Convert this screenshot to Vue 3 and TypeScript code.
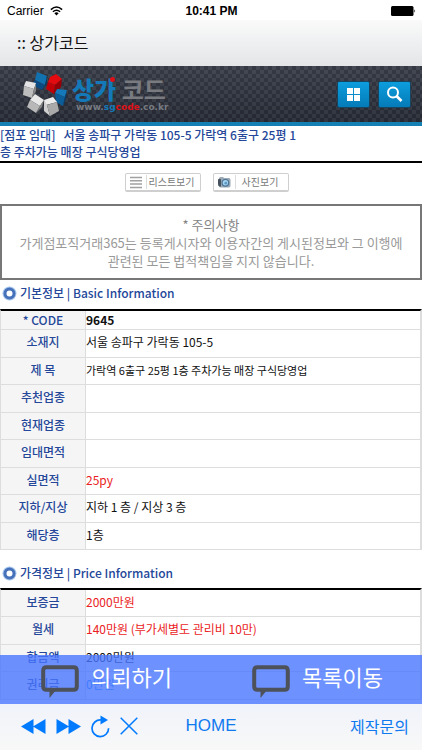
<script setup lang="ts">
interface Row {
  label: string
  value: string
  tone?: 'strong' | 'small' | 'red' | 'link'
}

const basicRows: Row[] = [
  { label: '* CODE', value: '9645', tone: 'strong' },
  { label: '소재지', value: '서울 송파구 가락동 105-5' },
  { label: '제 목', value: '가락역 6출구 25평 1층 주차가능 매장 구식당영업', tone: 'small' },
  { label: '추천업종', value: '' },
  { label: '현재업종', value: '' },
  { label: '임대면적', value: '' },
  { label: '실면적', value: '25py', tone: 'red' },
  { label: '지하/지상', value: '지하 1 층 / 지상 3 층' },
  { label: '해당층', value: '1층' },
]

const priceRows: Row[] = [
  { label: '보증금', value: '2000만원', tone: 'red' },
  { label: '월세', value: '140만원 (부가세별도 관리비 10만)', tone: 'red' },
  { label: '합금액', value: '2000만원' },
  { label: '권리금', value: '0만원', tone: 'link' },
]

const sections = [
  { title: '기본정보 | Basic Information', rows: basicRows, kind: 'basic' },
  { title: '가격정보 | Price Information', rows: priceRows, kind: 'price' },
]

const actions = ['의뢰하기', '목록이동']
</script>

<template>
  <div class="app">
    <div class="status">
      <div class="carrier">
        <span>Carrier</span>
        <svg width="13" height="10" viewBox="0 0 13 10" aria-hidden="true">
          <path d="M0.9 3.6 Q6.5 -1.6 12.1 3.6" fill="none" stroke="#000" stroke-width="1.6" />
          <path d="M2.9 5.8 Q6.5 2.6 10.1 5.8" fill="none" stroke="#000" stroke-width="1.5" />
          <path d="M4.4 7.3 Q6.5 5.4 8.6 7.3 L6.5 9.5 Z" fill="#000" />
        </svg>
      </div>
      <span class="clock">10:41 PM</span>
      <svg class="battery" width="25" height="10" viewBox="0 0 25 10" aria-hidden="true">
        <rect x="0" y="0" width="22.5" height="10" rx="1.5" />
        <path d="M23.4 3.2 Q25 5 23.4 6.8 Z" />
      </svg>
    </div>

    <div class="titlebar">:: 상가코드</div>

    <div class="web">
      <div class="page">
        <header class="banner">
          <a class="logo" href="#">
            <svg width="46" height="46" viewBox="0 0 46 46" aria-hidden="true">
              <g>
                <path d="M15 1 L25 5 L23 14 L13 9 Z" fill="#1272b0" />
                <path d="M13 9 L23 14 L20 19 L10 14 Z" fill="#0b4b84" />
                <path d="M23 14 L25 5 L25 12 L21 19 Z" fill="#083a68" />
              </g>
              <g>
                <path d="M28 6 L34 3 L40 8 L33 14 L26 11 Z" fill="#e30a10" />
                <path d="M26 11 L33 14 L32 23 L24 18 Z" fill="#c20008" />
                <path d="M33 14 L40 8 L39 16 L32 23 Z" fill="#960006" />
              </g>
              <g>
                <path d="M35 18 L45 19 L43 26 L33 22 Z" fill="#1578b8" />
                <path d="M33 22 L43 26 L41 35 L34 31 Z" fill="#0c5c98" />
                <path d="M43 26 L45 19 L44 28 L41 35 Z" fill="#083a68" />
              </g>
              <g>
                <path d="M4 10 L14 12 L12 18 L2 15 Z" fill="#e5e5e5" />
                <path d="M2 15 L12 18 L10 27 L1 24 Z" fill="#bdbdbd" />
                <path d="M12 18 L14 12 L14 20 L10 27 Z" fill="#858585" />
              </g>
              <g>
                <path d="M13 23 L22 29 L18 35 L8 29 Z" fill="#e8e8e8" />
                <path d="M8 29 L18 35 L14 42 L5 36 Z" fill="#b8b8b8" />
                <path d="M18 35 L22 29 L20 36 L14 42 Z" fill="#858585" />
              </g>
              <g>
                <path d="M22 29 L31 26 L35 31 L24 34 Z" fill="#ececec" />
                <path d="M22 29 L25 34 L28 45 L22 40 Z" fill="#d0d0d0" />
                <path d="M25 34 L35 31 L37 40 L28 45 Z" fill="#aaa" />
              </g>
            </svg>
            <span class="brand">
              <span class="name"><b>상가</b> <i>코드</i></span>
              <span class="domain">www.<b>sg</b><em>code</em>.co.kr</span>
            </span>
          </a>
          <div class="tools">
            <button type="button" aria-label="메뉴">
              <svg width="13" height="13" viewBox="0 0 13 13">
                <path d="M0 0h6v6H0z M7 0h6v6H7z M0 7h6v6H0z M7 7h6v6H7z" fill="#fff" />
              </svg>
            </button>
            <button type="button" aria-label="검색">
              <svg width="17" height="17" viewBox="0 0 17 17" fill="none" stroke="#fff">
                <circle cx="7" cy="6.5" r="5" stroke-width="2" />
                <path d="M10.5 10 L15.5 15" stroke-width="2.6" />
              </svg>
            </button>
          </div>
        </header>

        <h1>[점포 임대] &nbsp; 서울 송파구 가락동 105-5 가락역 6출구 25평 1<br />층 주차가능 매장 구식당영업</h1>

        <div class="views">
          <button type="button">
            <svg width="12" height="13" viewBox="0 0 12 13" aria-hidden="true">
              <path d="M0 1.5h12M0 4.8h12M0 8.1h12M0 11.4h12" stroke="#a0a0a0" stroke-width="1.5" />
            </svg>
            <span>리스트보기</span>
          </button>
          <button type="button">
            <svg width="13" height="12" viewBox="0 0 13 12" aria-hidden="true">
              <path d="M1 2.5 Q1 1 2.5 1 L5 1 L6 2 L11 2 Q12.5 2 12.5 4 V9.5 Q12.5 11.5 11 11.5 H3 Q1 11.5 1 10 Z" fill="#9aa9b5" />
              <path d="M0 3.5 Q1.5 2 3 3.5 V10.5 H1.5 Q0 10 0 8 Z" fill="#46535e" />
              <circle cx="7.4" cy="6.8" r="3.9" fill="#4a7598" />
              <circle cx="7.4" cy="6.8" r="2.7" fill="#a8d3ee" />
              <circle cx="7.8" cy="7.2" r="1.4" fill="#5c9ac4" />
            </svg>
            <span>사진보기</span>
          </button>
        </div>

        <div class="notice">
          <strong>* 주의사항</strong>
          <p>가게점포직거래365는 등록게시자와 이용자간의 게시된정보와 그 이행에 관련된 모든 법적책임을 지지 않습니다.</p>
        </div>

        <section v-for="s in sections" :key="s.kind" :class="s.kind">
          <h2>
            <svg width="15" height="15" viewBox="0 0 15 15" aria-hidden="true">
              <circle cx="7.5" cy="7.5" r="7" fill="#a9c6ee" />
              <circle cx="7.5" cy="7.5" r="4.5" fill="#fff" stroke="#4672ba" stroke-width="3" />
            </svg>
            <span>{{ s.title }}</span>
          </h2>
          <table>
            <tbody>
              <tr v-for="r in s.rows" :key="r.label">
                <th scope="row">{{ r.label }}</th>
                <td :class="r.tone">{{ r.value }}</td>
              </tr>
            </tbody>
          </table>
        </section>
      </div>

      <div class="actions">
        <button v-for="a in actions" :key="a" type="button">
          <svg width="38" height="33" viewBox="0 0 38 33" aria-hidden="true">
            <path d="M5.5 2.2H32.5Q35.8 2.2 35.8 5.5V21.5Q35.8 24.8 32.5 24.8H5.5Q2.2 24.8 2.2 21.5V5.5Q2.2 2.2 5.5 2.2Z" fill="none" stroke="#4d5159" stroke-width="4" />
            <path d="M8.5 25H15L8.5 33Z" fill="#4d5159" />
          </svg>
          <span>{{ a }}</span>
        </button>
      </div>
    </div>

    <nav class="toolbar">
      <div class="controls">
        <button type="button" aria-label="뒤로">
          <svg width="25" height="15" viewBox="0 0 25 15"><path d="M0 7.5 12.5 0V15Z M12 7.5 24.5 0V15Z" fill="#007aff" /></svg>
        </button>
        <button type="button" aria-label="앞으로">
          <svg width="25" height="15" viewBox="0 0 25 15"><path d="M25 7.5 12.5 0V15Z M13 7.5 .5 0V15Z" fill="#007aff" /></svg>
        </button>
        <button type="button" aria-label="새로고침">
          <svg width="19" height="23" viewBox="0 0 19 23">
            <path d="M10 5 A8.3 8.3 0 1 0 17.6 13.3" fill="none" stroke="#007aff" stroke-width="1.7" />
            <path d="M9.5 0.5 17 5 9.5 9.5Z" fill="#007aff" />
          </svg>
        </button>
        <button type="button" aria-label="중지">
          <svg width="18" height="18" viewBox="0 0 18 18"><path d="M.7.7 17.3 17.3M17.3.7.7 17.3" stroke="#007aff" stroke-width="1.5" /></svg>
        </button>
      </div>
      <a class="home" href="#">HOME</a>
      <a class="contact" href="#">제작문의</a>
    </nav>
  </div>
</template>

<style>
body {
  background: #fff;
}
</style>

<style scoped>
* {
  box-sizing: border-box;
}
.app {
  display: flex;
  flex-direction: column;
  height: 100vh;
  overflow: hidden;
  font-family: "Noto Sans CJK KR", sans-serif;
  color: #111;
}
button {
  padding: 0;
  border: 0;
  background: none;
  font: inherit;
  color: inherit;
}
a {
  color: inherit;
  text-decoration: none;
}
svg {
  display: block;
  flex: none;
}
.status {
  display: grid;
  grid-template-columns: 1fr auto 1fr;
  align-items: center;
  height: 20px;
  padding: 2px 6px 0 7px;
  font: 12px/18px "Liberation Sans", sans-serif;
  color: #000;
}
.carrier {
  display: flex;
  align-items: center;
  gap: 6px;
}
.clock {
  font-weight: 700;
}
.battery {
  justify-self: end;
}
.titlebar {
  height: 46px;
  padding-left: 17px;
  background: linear-gradient(#fafafa, #e3e5e7);
  font-size: 16px;
  line-height: 44px;
}
.web {
  position: relative;
  flex: 1;
  min-height: 0;
}
.page {
  height: 100%;
  overflow: auto;
  scrollbar-width: none;
}
.banner {
  display: flex;
  align-items: center;
  justify-content: space-between;
  height: 60px;
  padding: 0 11px 0 22px;
  border-bottom: 4px solid #1580b3;
  background:
    linear-gradient(rgba(255, 255, 255, 0.05), rgba(0, 0, 0, 0.15)),
    repeating-conic-gradient(#2b2f3a 0 25%, #3a3f4a 0 50%) 0 0 / 8px 8px;
}
.logo {
  display: flex;
  align-items: center;
  gap: 4px;
}
.brand {
  display: flex;
  flex-direction: column;
}
.name {
  font-size: 24px;
  font-weight: 700;
  line-height: 26px;
  color: #797b80;
}
.name b {
  position: relative;
  color: #1479b8;
}
.name b::after {
  content: "";
  position: absolute;
  top: 6px;
  right: 1px;
  width: 5px;
  height: 5px;
  border-radius: 50%;
  background: #e01017;
}
.name i {
  font-style: normal;
}
.domain {
  padding-left: 4px;
  font: bold 9px/10px "DejaVu Sans", sans-serif;
  color: #777a80;
}
.domain b {
  color: #1479b8;
}
.domain em {
  font-style: normal;
  color: #dd1219;
}
.tools {
  display: flex;
  gap: 8px;
}
.tools button {
  display: grid;
  place-items: center;
  width: 33px;
  height: 27px;
  border: 1px solid #17445f;
  border-radius: 2px;
  background: linear-gradient(#0c9ddd, #057bb8);
}
h1 {
  margin: 0;
  padding-bottom: 1px;
  border-bottom: 2px solid #000;
  font-size: 12px;
  font-weight: 500;
  line-height: 17px;
  color: #24479a;
}
.views {
  display: flex;
  justify-content: center;
  gap: 12px;
  padding: 10px 8px 12px 0;
}
.views button {
  display: flex;
  align-items: center;
  gap: 4px;
  width: 76px;
  height: 19px;
  padding: 0 4px;
  border: 1px solid #cfcfcf;
  border-bottom-width: 2px;
  border-radius: 2px;
  font-size: 10px;
  line-height: 14px;
  color: #777;
}
.views span {
  flex: 1;
  border-left: 1px solid #ddd;
  text-align: center;
  white-space: nowrap;
}
.notice {
  padding: 10px 8px 8px;
  border: 2px solid #777;
  font-size: 13px;
  line-height: 18px;
  text-align: center;
  color: #999;
}
.notice strong {
  font-weight: 400;
  color: #858585;
}
.notice p {
  margin: 0;
  word-break: keep-all;
}
h2 {
  display: flex;
  align-items: center;
  gap: 3px;
  height: 29px;
  margin: 0;
  padding: 0 0 2px 2px;
  font-size: 12px;
  font-weight: 500;
  line-height: 16px;
  color: #24479a;
}
h2 span {
  padding-bottom: 1px;
}
.price h2 {
  margin-top: 8px;
  height: 30px;
  padding-bottom: 0;
}
table {
  width: 100%;
  border-top: 2px solid #000;
  border-right: 2px solid #ddd;
  border-left: 1px solid #ddd;
  border-spacing: 0;
  font-size: 12px;
  line-height: 16px;
}
th,
td {
  height: 27px;
  padding: 0 0 3px;
  border-bottom: 1px solid #ddd;
}
tr:nth-child(even) > * {
  height: 28px;
}
.basic tr:first-child > * {
  height: 19px;
  padding: 0 0 1px;
}
th {
  width: 85px;
  border-right: 1px solid #ddd;
  background: #f5f5f5;
  font-weight: 500;
  color: #24479a;
}
td {
  text-align: left;
}
td.strong {
  font-weight: 700;
}
.small {
  font-size: 11px;
}
.red {
  color: #ea1c24;
}
.link {
  color: #1e90ff;
}
.actions {
  position: absolute;
  right: 0;
  bottom: 0;
  left: 0;
  display: flex;
  height: 49px;
  background: rgba(72, 118, 255, 0.8);
}
.actions button {
  display: flex;
  flex: 1;
  align-items: center;
  gap: 12px;
  padding-left: 41px;
  font-size: 22px;
  font-weight: 400;
  line-height: 30px;
  color: #fff;
}
.actions svg {
  margin-top: 4px;
}
.actions span {
  padding-bottom: 8px;
}
.toolbar {
  display: grid;
  grid-template-columns: 1fr auto 1fr;
  align-items: center;
  height: 46px;
  padding-bottom: 2px;
  background: linear-gradient(#f0f3fa, #f8f8f8);
  color: #0f7af0;
}
.controls {
  display: flex;
  align-items: center;
  gap: 10px;
  padding-left: 21px;
}
.home {
  font: 17px/20px "Liberation Sans", sans-serif;
}
.contact {
  justify-self: end;
  padding-right: 13px;
  font-size: 16px;
  line-height: 20px;
}
</style>
